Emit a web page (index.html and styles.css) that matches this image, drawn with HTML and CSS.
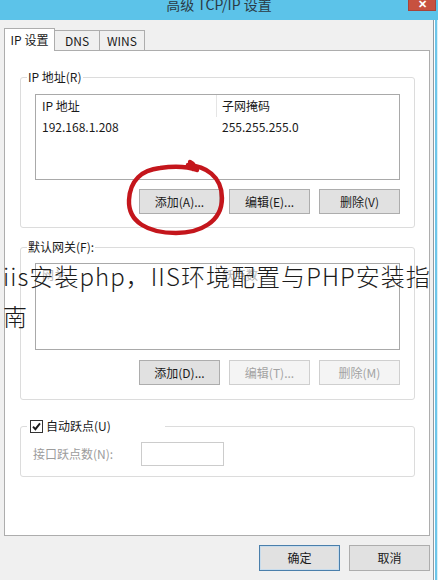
FILE: index.html
```html
<!DOCTYPE html>
<html lang="zh-CN">
<head>
<meta charset="utf-8">
<title>高级 TCP/IP 设置</title>
<link rel="stylesheet" href="styles.css">
</head>
<body>
<div class="window">
  <div class="titlebar">
    <span class="tb-spacer"></span>
    <span class="title">高级 TCP/IP 设置</span>
    <span class="close">✕</span>
  </div>
  <div class="frame">
    <div class="client">
      <div class="tabs">
        <div class="tab active">IP 设置</div>
        <div class="tab">DNS</div>
        <div class="tab">WINS</div>
      </div>
      <div class="panel">
        <fieldset class="group g-ip">
          <legend>IP 地址(R)</legend>
          <div class="listview lv-ip">
            <div class="lv-head"><span class="col1">IP 地址</span><span class="col2">子网掩码</span></div>
            <div class="lv-row"><span class="col1">192.168.1.208</span><span class="col2">255.255.255.0</span></div>
          </div>
          <div class="btnrow">
            <button class="btn">添加(A)...</button>
            <button class="btn">编辑(E)...</button>
            <button class="btn">删除(V)</button>
          </div>
        </fieldset>

        <fieldset class="group g-gw">
          <legend>默认网关(F):</legend>
          <div class="listview lv-gw">
            <div class="lv-head faint"><span class="col1">网关</span><span class="col2">跃点数</span></div>
          </div>
          <div class="btnrow">
            <button class="btn">添加(D)...</button>
            <button class="btn disabled">编辑(T)...</button>
            <button class="btn disabled">删除(M)</button>
          </div>
        </fieldset>

        <fieldset class="group g-metric">
          <legend class="chk-legend"><span class="checkbox"><svg viewBox="0 0 11 11" width="11" height="11"><path d="M2 5.6 L4.4 8.2 L9 2.4" fill="none" stroke="#1a1a1a" stroke-width="1.9"/></svg></span><span>自动跃点(U)</span></legend>
          <div class="metric-row">
            <span class="metric-label">接口跃点数(N):</span>
            <span class="textbox"></span>
          </div>
        </fieldset>
      </div>
      <div class="dlg-buttons">
        <button class="btn default">确定</button>
        <button class="btn">取消</button>
      </div>
    </div>
    <div class="frame-right"></div>
  </div>

  <svg class="redmark" width="438" height="580" viewBox="0 0 438 580">
    <path d="M190 162 C194 164 196 167 193 169 M188 165 C205 166 222 176 222 198 C222 222 200 233 176 233 C148 233 128 222 129 200 C130 180 142 170 160 168 C174 166 186 166 197 170" fill="none" stroke="#c4161c" stroke-width="4.4" stroke-linecap="round" stroke-linejoin="round"/>
  </svg>

  <div class="caption">iis安装php，IIS环境配置与PHP安装指南</div>
</div>
</body>
</html>
```

FILE: styles.css
```css
* { box-sizing: border-box; }

html, body {
  margin: 0;
  padding: 0;
}

body {
  width: 438px;
  height: 580px;
  overflow: hidden;
  background: #f0f0f0;
  font-family: "Noto Sans CJK SC", "Noto Sans", sans-serif;
  font-size: 12px;
  line-height: 16px;
  color: #1a1a1a;
}

.window {
  position: relative;
  width: 438px;
  height: 580px;
  background: #f0f0f0;
}

/* title bar */
.titlebar {
  display: flex;
  height: 20px;
  background: #5cc3e9;
  overflow: hidden;
}
.tb-spacer { width: 30px; flex: none; }
.title {
  flex: 1;
  text-align: center;
  font-size: 14px;
  line-height: 14px;
  margin-top: -3px;
  color: #2b3a44;
}
.close {
  width: 28px;
  height: 11px;
  margin-right: 2px;
  background: #c7513f;
  border: 1px solid #a8443a;
  border-top: none;
  color: #fff;
  font-size: 11px;
  line-height: 6px;
  text-align: center;
  font-weight: bold;
  overflow: hidden;
}

/* frame */
.frame {
  display: flex;
  height: 560px;
}
.client {
  width: 434px;
  border-right: 1px solid #8d9aa3;
  background: #f0f0f0;
}
.frame-right {
  flex: 1;
  background: #d8eef7;
  border-left: 1px solid #ffffff;
  box-shadow: inset 2px 0 0 #6cc6ea;
}

/* tabs */
.tabs {
  display: flex;
  align-items: flex-end;
  height: 22px;
  margin: 8px 0 0 4px;
  position: relative;
  z-index: 1;
}
.tab {
  height: 20px;
  width: 45px;
  border: 1px solid #adadad;
  border-left: none;
  border-bottom: none;
  background: #f0f0f0;
  text-align: center;
  line-height: 19px;
}
.tab.active {
  width: 51px;
  height: 23px;
  margin-bottom: -1px;
  border-left: 1px solid #adadad;
  background: #ffffff;
  line-height: 22px;
}

/* panel */
.panel {
  margin-left: 4px;
  width: 426px;
  height: 486px;
  background: #ffffff;
  border: 1px solid #adadad;
  padding-top: 18px;
}

/* group boxes */
.group {
  margin: 0 14px 0 15px;
  padding: 9px 14px 13px 14px;
  border: 1px solid #dcdcdc;
  border-radius: 3px;
  min-inline-size: 0;
}
.group legend {
  margin-left: -8px;
  padding: 0 1px;
  line-height: 16px;
  height: 16px;
  color: #1a1a1a;
}
.g-gw {
  margin-top: 11px;
  padding-top: 8px;
  padding-bottom: 14px;
}
.g-metric {
  margin-top: 18px;
  padding: 8px 12px 10px 12px;
}
.chk-legend {
  display: flex;
  align-items: center;
  gap: 3px;
  width: 138px;
  background: #ffffff;
}
.g-metric .chk-legend {
  margin-left: -6px;
  padding-left: 3px;
}
.checkbox {
  display: flex;
  align-items: center;
  justify-content: center;
  width: 13px;
  height: 13px;
  border: 1px solid #333333;
  background: #ffffff;
}

/* list views */
.listview {
  border: 1px solid #a9a9a9;
  background: #ffffff;
}
.lv-ip { height: 86px; }
.lv-gw { height: 87px; }
.lv-head, .lv-row {
  display: flex;
}
.lv-head { height: 22px; line-height: 22px; }
.lv-row { height: 20px; line-height: 20px; }
.col1 {
  width: 181px;
  padding-left: 6px;
}
.col2 {
  flex: 1;
  padding-left: 5px;
}
.lv-head .col1 { border-right: 1px solid #e5e5e5; }
.faint { color: #b8b8b8; }

/* buttons */
.btnrow {
  display: flex;
  justify-content: flex-end;
  gap: 9px;
  margin-top: 9px;
}
.g-gw .btnrow { margin-top: 10px; }
.btn {
  width: 81px;
  height: 25px;
  padding: 0;
  border: 1px solid #adadad;
  background: #e1e1e1;
  font-family: inherit;
  font-size: 12px;
  line-height: 16px;
  color: #1a1a1a;
}
.btn.disabled {
  background: #f4f4f4;
  border-color: #cfcfcf;
  color: #a3a3a3;
}
.btn.default {
  border-color: #4a7fab;
  box-shadow: inset 0 0 0 1px #c8dcec;
}

/* metric row */
.metric-row {
  display: flex;
  align-items: center;
}
.metric-label {
  width: 108px;
  color: #9c9c9c;
}
.textbox {
  width: 83px;
  height: 24px;
  border: 1px solid #cccccc;
  background: #ffffff;
}

/* bottom buttons */
.dlg-buttons {
  display: flex;
  justify-content: flex-end;
  gap: 9px;
  margin-top: 9px;
  padding-right: 3px;
}
.dlg-buttons .btn { height: 26px; }

/* overlays */
.redmark {
  position: absolute;
  left: 0;
  top: 0;
  pointer-events: none;
}
.caption {
  position: absolute;
  left: 3px;
  top: 256px;
  width: 436px;
  font-family: "Noto Sans CJK SC", "Noto Sans", sans-serif;
  font-size: 24px;
  font-weight: 300;
  line-height: 40px;
  letter-spacing: 1.05px;
  color: #1c1c1c;
}
```
